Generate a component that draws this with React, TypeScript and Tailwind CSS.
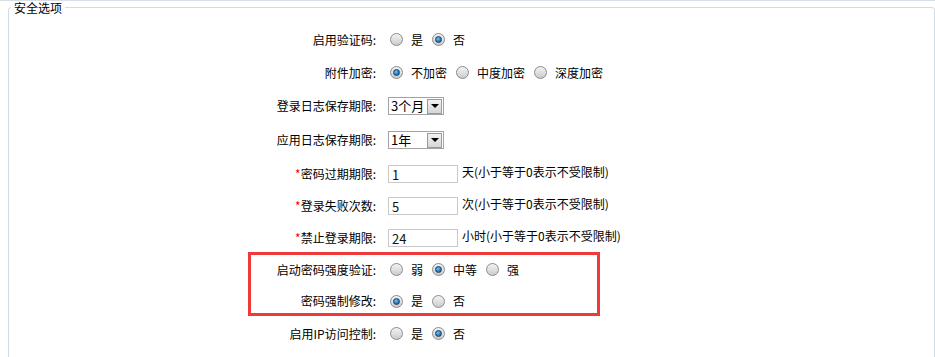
import type { ReactNode } from 'react';

// 安全选项 — 表单行：左侧右对齐标签，右侧单选 / 下拉 / 输入框

function Radio({ checked = false }: { checked?: boolean }) {
  return (
    <span className="ml-[2px] mr-[8px] flex h-[13px] w-[13px] shrink-0 items-center justify-center rounded-full border border-[#8a8b8b] bg-[linear-gradient(180deg,#f2f2f2_0%,#dedede_55%,#cbcbcb_100%)]">
      {checked && (
        <span className="h-[7px] w-[7px] rounded-full border border-[#1b3f66] bg-[radial-gradient(circle_at_40%_35%,#7ec4f2_0%,#2a86c8_50%,#0e4f88_100%)]" />
      )}
    </span>
  );
}

function RadioGroup({ options, value }: { options: string[]; value: number }) {
  return (
    <div className="flex items-center">
      {options.map((o, i) => (
        <label key={o} className="flex items-center">
          <Radio checked={i === value} />
          <span className="mr-[7px]">{o}</span>
        </label>
      ))}
    </div>
  );
}

function Select({ value }: { value: string }) {
  return (
    <div className="flex h-[18px] w-[56px] items-center justify-between border border-[#a3a3a3] bg-white pl-[2px] pr-px">
      <span className="text-[13px] leading-[16px]">{value}</span>
      <span className="flex h-[15px] w-[15px] items-center justify-center border border-[#9a9a9a] bg-[linear-gradient(180deg,#f2f2f2,#d6d6d6)]">
        <span className="h-0 w-0 border-x-[4px] border-t-[4px] border-x-transparent border-t-black" />
      </span>
    </div>
  );
}

function TextInput({ value, hint }: { value: string; hint: string }) {
  return (
    <div className="flex items-center">
      <div className="flex h-[18px] w-[70px] items-end border border-[#c9c9c9] bg-white pl-[3px] text-[13px] leading-[15px] text-[#111]">
        {value}
      </div>
      <span className="ml-[4px] mt-[-4px]">{hint}</span>
    </div>
  );
}

function Row({
  h,
  label,
  required,
  children,
}: {
  h: string;
  label: string;
  required?: boolean;
  children: ReactNode;
}) {
  return (
    <div className={`flex items-center ${h}`}>
      <div className="w-[367px] shrink-0 text-right">
        {required && <span className="text-[#f00]">*</span>}
        {label}:
      </div>
      <div className="pl-3">{children}</div>
    </div>
  );
}

export default function App() {
  return (
    <div className="h-[357px] overflow-hidden border-t border-[#d7dee6] bg-white pl-2 font-['Noto_Sans_CJK_SC','Liberation_Sans',sans-serif] text-[12px] leading-[14px] text-black">
      <fieldset className="rounded-[3px] border border-[#d3dbe4] pb-4 pt-[9px]">
        <legend className="ml-[2px] px-[3px] text-[12px] leading-[13px] text-black">安全选项</legend>

        <Row h="h-[33px]" label="启用验证码">
          <RadioGroup options={['是', '否']} value={1} />
        </Row>
        <Row h="h-[33px]" label="附件加密">
          <RadioGroup options={['不加密', '中度加密', '深度加密']} value={0} />
        </Row>
        <Row h="h-[34px]" label="登录日志保存期限">
          <Select value="3个月" />
        </Row>
        <Row h="h-[34px]" label="应用日志保存期限">
          <Select value="1年" />
        </Row>
        <Row h="h-[33px]" label="密码过期期限" required>
          <TextInput value="1" hint="天(小于等于0表示不受限制)" />
        </Row>
        <Row h="h-[32px]" label="登录失败次数" required>
          <TextInput value="5" hint="次(小于等于0表示不受限制)" />
        </Row>
        <Row h="h-[32px]" label="禁止登录期限" required>
          <TextInput value="24" hint="小时(小于等于0表示不受限制)" />
        </Row>

        <div className="relative">
          <Row h="h-[31px]" label="启动密码强度验证">
            <RadioGroup options={['弱', '中等', '强']} value={1} />
          </Row>
          <Row h="h-[32px]" label="密码强制修改">
            <RadioGroup options={['是', '否']} value={0} />
          </Row>
          {/* 标注框 */}
          <div className="pointer-events-none absolute left-[239px] top-[-2px] h-[64px] w-[352px] border-[3px] border-[#f03a3a]" />
        </div>

        <Row h="h-[33px]" label="启用IP访问控制">
          <RadioGroup options={['是', '否']} value={1} />
        </Row>
      </fieldset>
    </div>
  );
}
